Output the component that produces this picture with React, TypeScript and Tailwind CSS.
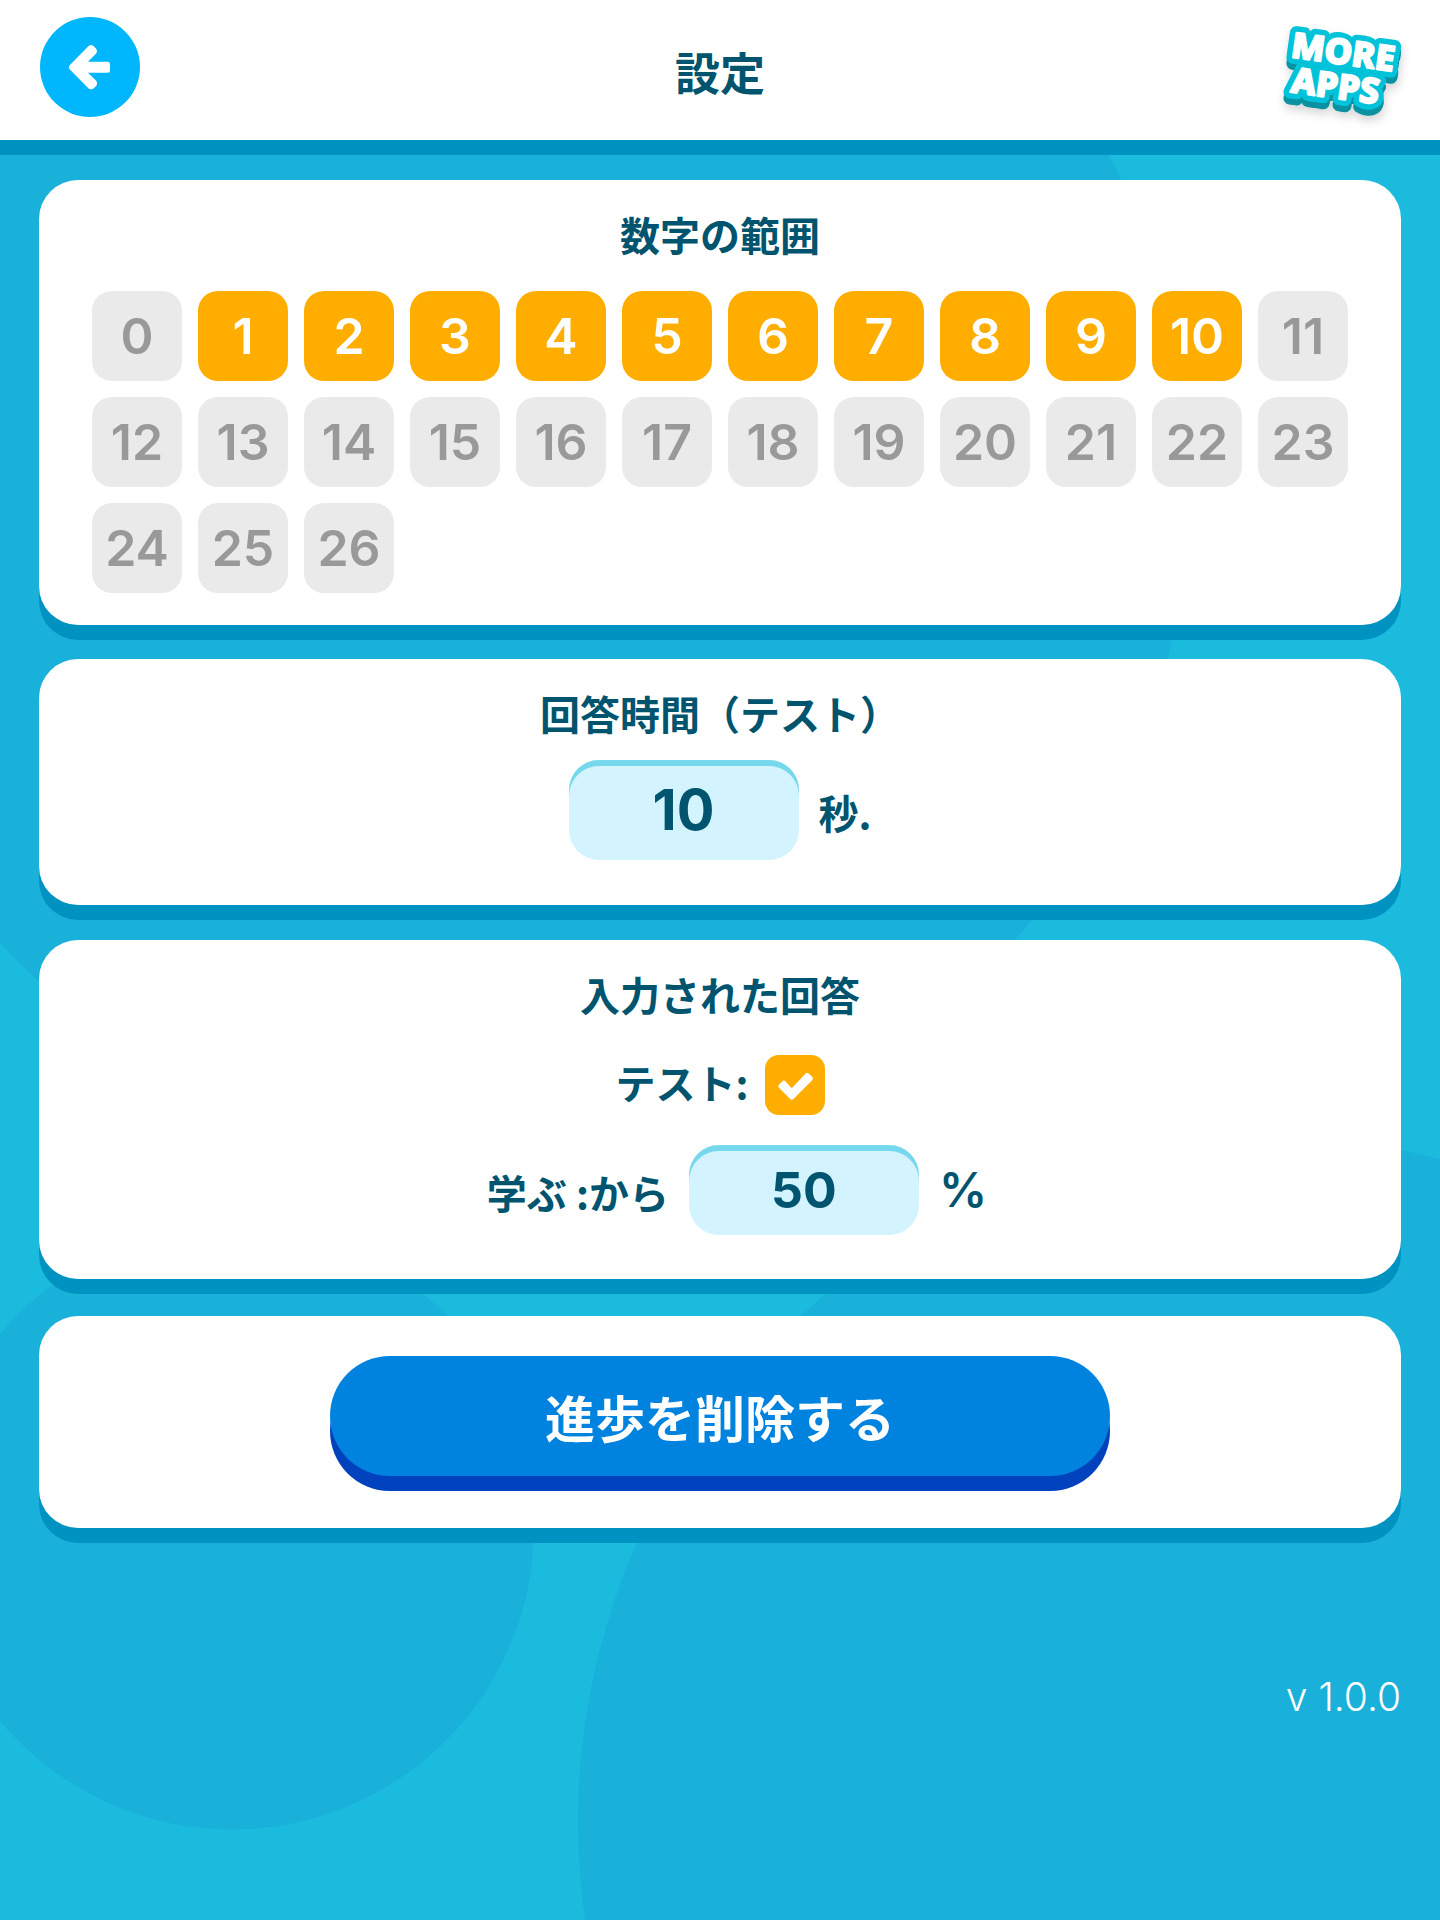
import { useState } from "react";
import type { ReactNode } from "react";

const NUMBERS = Array.from({ length: 27 }, (_, i) => i);

function Backdrop() {
  return (
    <svg
      className="absolute inset-0 h-full w-full"
      viewBox="0 0 1440 1920"
      preserveAspectRatio="xMidYMin slice"
      aria-hidden="true"
    >
      <g fill="#19b0da">
        <circle cx="506" cy="481" r="685" />
        <circle cx="232" cy="1527.5" r="302" />
        <circle cx="1263" cy="1821" r="685" />
      </g>
    </svg>
  );
}

function LogoLines() {
  return (
    <>
      <text transform="translate(12 37) rotate(8)">MORE</text>
      <text transform="translate(12 72) rotate(8)">APPS</text>
    </>
  );
}

function MoreAppsLogo() {
  return (
    <svg
      className="h-[100px] w-[130px] overflow-visible"
      viewBox="0 0 130 100"
      fontFamily='"Noto Sans", "Open Sans", sans-serif'
      fontWeight="800"
      fontSize="35"
      aria-hidden="true"
    >
      <defs>
        <filter id="logo-shadow" x="-20%" y="-20%" width="140%" height="150%">
          <feDropShadow dx="1" dy="5" stdDeviation="5" floodColor="#000" floodOpacity="0.16" />
        </filter>
      </defs>
      <g filter="url(#logo-shadow)" strokeLinejoin="round" strokeWidth="13">
        <g fill="#07909f" stroke="#07909f" transform="translate(0 6)">
          <LogoLines />
        </g>
        <g fill="#00c2d9" stroke="#00c2d9">
          <LogoLines />
        </g>
      </g>
      <g fill="#fff" stroke="#fff" strokeWidth="2" strokeLinejoin="round">
        <LogoLines />
      </g>
    </svg>
  );
}

function Header() {
  return (
    <header className="relative grid h-[155px] grid-cols-[1fr_auto_1fr] items-center border-b-[15px] border-[#0093c1] bg-white px-10">
      <button
        type="button"
        aria-label="戻る"
        className="mt-[17px] size-[100px] self-start rounded-full bg-[#00b7fd]"
      >
        <svg viewBox="0 0 100 100" className="size-full" fill="#fff" aria-hidden="true">
          <path d="M29.4 48.6 L48.6 29 Q51 27 53.4 29 L56.2 31.8 Q58 34.2 56.2 36.6 L48 44.8 H67.5 Q70 44.8 70 47.3 V53.3 Q70 55.8 67.5 55.8 H48 L56.2 63.8 Q58 66.2 56.2 69 L53.4 71.4 Q51 73.2 48.6 71.4 L29.4 52 Q28.2 50.3 29.4 48.6 Z" />
        </svg>
      </button>
      <h1 className="pt-1 text-[45px] font-bold leading-[60px]">設定</h1>
      <a href="#more-apps" aria-label="More apps" className="-mr-2 justify-self-end">
        <MoreAppsLogo />
      </a>
    </header>
  );
}

function Card({ title, className, children }: { title?: string; className: string; children: ReactNode }) {
  return (
    <section className={`rounded-[39px] bg-white shadow-[0_15px_0_#0093c1] ${className}`}>
      {title && <h2 className="pt-6 text-center text-[40px] font-bold leading-[60px]">{title}</h2>}
      {children}
    </section>
  );
}

const FIELD =
  "w-[230px] rounded-[30px] bg-[#d3f3ff] text-center font-bold shadow-[inset_0_6px_0_#76d8ed] outline-none font-['Inter',sans-serif]";

export default function App() {
  const [selected, setSelected] = useState(() => new Set(NUMBERS.slice(1, 11)));
  const [seconds, setSeconds] = useState("10");
  const [percent, setPercent] = useState("50");
  const [typed, setTyped] = useState(true);

  const toggle = (n: number) => {
    const next = new Set(selected);
    if (!next.delete(n)) next.add(n);
    setSelected(next);
  };

  return (
    <div
      lang="ja"
      className="relative min-h-screen overflow-hidden bg-[#1bbbde] font-['Noto_Sans_CJK_JP',sans-serif] text-[#00546d]"
    >
      <Backdrop />
      <Header />
      <main className="relative flex flex-col px-[39px] pt-[25px]">
        <Card title="数字の範囲" className="pb-8">
          <div className="mt-[27px] flex flex-wrap gap-4 px-[53px]">
            {NUMBERS.map((n) => (
              <button
                key={n}
                type="button"
                aria-pressed={selected.has(n)}
                onClick={() => toggle(n)}
                className={`size-[90px] rounded-[20px] font-['Inter',sans-serif] text-[50px] font-semibold leading-none ${
                  selected.has(n) ? "bg-[#ffae00] text-white" : "bg-[#eaeaea] text-[#999]"
                }`}
              >
                {n}
              </button>
            ))}
          </div>
        </Card>

        <Card title="回答時間（テスト）" className="mt-[34px] pb-[45px]">
          <div className="mt-[17px] flex items-center justify-center gap-5 text-[40px] font-bold">
            <input
              type="text"
              inputMode="numeric"
              aria-label="回答時間（テスト）"
              value={seconds}
              onChange={(e) => setSeconds(e.target.value)}
              className={`h-[100px] text-[56px] ${FIELD}`}
            />
            <span className="pt-1 leading-[60px]">秒.</span>
          </div>
        </Card>

        <Card title="入力された回答" className="mt-[35px] pb-11">
          <div className="mt-[31px] flex items-center justify-center gap-4 text-[40px] font-bold">
            <label htmlFor="typed-test" className="self-start leading-[54px]">
              テスト:
            </label>
            <span className="relative size-[60px]">
              <input
                id="typed-test"
                type="checkbox"
                checked={typed}
                onChange={(e) => setTyped(e.target.checked)}
                className="block size-full appearance-none rounded-[14px] bg-[#eaeaea] checked:bg-[#ffae00]"
              />
              {typed && (
                <svg
                  viewBox="0 0 60 60"
                  className="pointer-events-none absolute inset-0"
                  fill="#fff"
                  aria-hidden="true"
                >
                  <path d="M13.8 32.6 Q12.6 31.2 13.8 29.8 L17.4 26.2 Q18.9 25 20.4 26.2 L26.8 33.2 L40.6 18.4 Q42.1 17.2 43.6 18.4 L47.2 21.8 Q48.6 23.3 47.4 25 L28.2 44.2 Q26.8 45.4 25.4 44.2 Z" />
                </svg>
              )}
            </span>
          </div>
          <div className="mt-[30px] flex items-center justify-center gap-5 pl-[34px] text-[40px] font-bold">
            <label htmlFor="learn-percent" className="pt-1 leading-[60px]">
              学ぶ :から
            </label>
            <input
              id="learn-percent"
              type="text"
              inputMode="numeric"
              value={percent}
              onChange={(e) => setPercent(e.target.value)}
              className={`h-[90px] text-[50px] ${FIELD}`}
            />
            <span className="font-['Inter',sans-serif] text-[48px] font-semibold leading-[60px]">%</span>
          </div>
        </Card>

        <Card className="mt-[37px] flex justify-center px-10 pb-[52px] pt-10">
          <button
            type="button"
            className="h-[120px] w-full max-w-[780px] rounded-[60px] bg-[#0082df] text-[50px] font-bold text-white shadow-[0_15px_0_#0041bd]"
          >
            進歩を削除する
          </button>
        </Card>

        <p className="mt-[139px] pb-10 text-right font-['Inter',sans-serif] text-[39px] font-light leading-[60px] text-white">
          v 1.0.0
        </p>
      </main>
    </div>
  );
}
